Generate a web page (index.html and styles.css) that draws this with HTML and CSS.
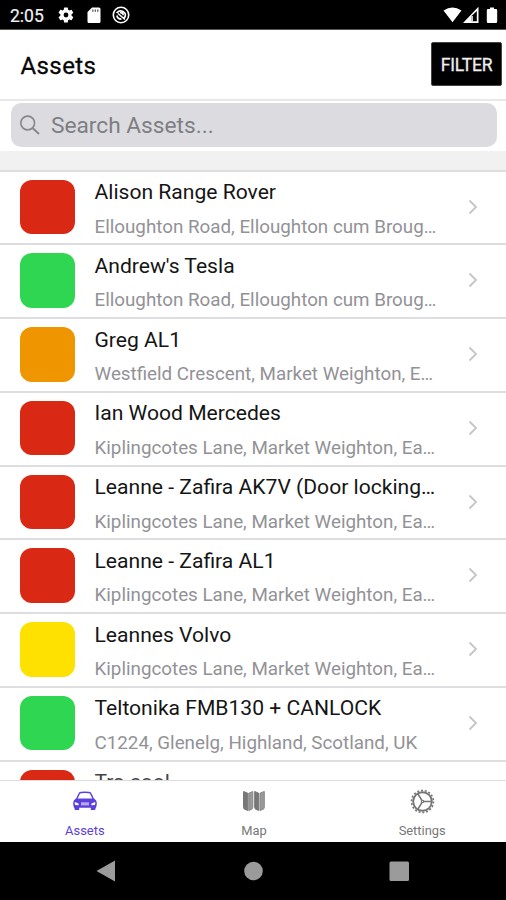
FILE: index.html
```html
<!DOCTYPE html>
<html lang="en">
<head>
<meta charset="utf-8">
<title>Assets</title>
<link rel="stylesheet" href="styles.css">
</head>
<body>
<div class="status">
  <span class="time">2:05</span>
  <svg class="s-gear" width="18" height="18" viewBox="0 0 24 24"><path fill="#fff" fill-rule="evenodd" d="M19.4 13a7.500 7.500 0 0 0 0-2l2.100-1.600a.5.5 0 0 0 .1-.6l-2-3.500a.5.5 0 0 0-.6-.2l-2.500 1a7.300 7.300 0 0 0-1.700-1l-.4-2.600a.5.5 0 0 0-.5-.4h-4a.5.5 0 0 0-.5.4L9 5.100a7.300 7.300 0 0 0-1.700 1l-2.500-1a.5.5 0 0 0-.6.2l-2 3.500a.5.5 0 0 0 .1.600L4.500 11a7.500 7.500 0 0 0 0 2l-2.200 1.600a.5.5 0 0 0-.1.600l2 3.500c.1.200.4.300.6.200l2.500-1c.5.400 1.100.7 1.700 1l.4 2.600c0 .2.200.4.500.4h4c.3 0 .5-.2.500-.4l.4-2.600a7.300 7.300 0 0 0 1.700-1l2.500 1c.2.100.5 0 .6-.2l2-3.500a.5.500 0 0 0-.1-.6zM12 15.200a3.200 3.200 0 1 1 0-6.400 3.200 3.200 0 0 1 0 6.400z"/></svg>
  <svg class="s-card" width="14" height="17" viewBox="0 0 14 17"><path fill="#fff" d="M5 .5h7q1.500 0 1.500 1.500v12.500q0 1.500-1.500 1.500H2q-1.500 0-1.500-1.500V5z"/><path stroke="#000" stroke-width="1.200" d="M5.800 2.500v2.200M8.300 2.500v2.200M10.800 2.500v2.200" opacity=".7"/></svg>
  <svg class="s-circle" width="18" height="18" viewBox="0 0 18 18" fill="none" stroke="#fff"><circle cx="9" cy="9" r="7.700" stroke-width="1.600"/><path stroke-width="1.600" d="M4.500 7Q9 2.500 13.200 7.500 14 11 11.500 12.500M6 7.500l7 6M4.800 9.500Q5.500 13 9.500 13.300M8 6.800q3-.3 3.200 2.400"/></svg>
  <span class="grow"></span>
  <svg width="56" height="18" viewBox="0 0 56 18"><path fill="#fff" d="M.5 4.500Q9.500-1.500 18.500 4.500L9.500 16.200zM35.500.7V17H20z"/><path fill="#000" d="M33.800 5v10.300h-5.300V10z"/><path fill="#fff" d="M28.500 10h1.300v5.500h-1.300z"/><path fill="#fff" d="M47 1.500h4V3h2q1.200 0 1.200 1.200V15.800Q54.200 17 53 17h-8q-1.200 0-1.200-1.200V4.200Q43.800 3 45 3h2z"/></svg>
</div>
<header class="header"><h1>Assets</h1><button class="filter">FILTER</button></header>
<div class="searchbar"><div class="search">
  <svg width="22" height="22" viewBox="0 0 22 22" fill="none" stroke="#85858a" stroke-width="1.600"><circle cx="7.700" cy="9" r="6.900"/><path d="m12.600 14 6.400 6" stroke-width="1.900"/></svg>
  <span>Search Assets...</span></div></div>
<div class="gap"></div>
<main class="list">
  <div class="row"><i class="tile red"></i><div class="info"><b>Alison Range Rover</b><span>Elloughton Road, Elloughton cum Broug…</span></div><svg class="chev" viewBox="0 0 10 16"><path d="m1.500 1.500 6.500 6.500-6.500 6.500"/></svg></div>
  <div class="row"><i class="tile green"></i><div class="info"><b>Andrew's Tesla</b><span>Elloughton Road, Elloughton cum Broug…</span></div><svg class="chev" viewBox="0 0 10 16"><path d="m1.500 1.500 6.500 6.500-6.500 6.500"/></svg></div>
  <div class="row"><i class="tile orange"></i><div class="info"><b>Greg AL1</b><span>Westfield Crescent, Market Weighton, E…</span></div><svg class="chev" viewBox="0 0 10 16"><path d="m1.500 1.500 6.500 6.500-6.500 6.500"/></svg></div>
  <div class="row"><i class="tile red"></i><div class="info"><b>Ian Wood Mercedes</b><span>Kiplingcotes Lane, Market Weighton, Ea…</span></div><svg class="chev" viewBox="0 0 10 16"><path d="m1.500 1.500 6.500 6.500-6.500 6.500"/></svg></div>
  <div class="row"><i class="tile red"></i><div class="info"><b>Leanne - Zafira AK7V (Door locking…</b><span>Kiplingcotes Lane, Market Weighton, Ea…</span></div><svg class="chev" viewBox="0 0 10 16"><path d="m1.500 1.500 6.500 6.500-6.500 6.500"/></svg></div>
  <div class="row"><i class="tile red"></i><div class="info"><b>Leanne - Zafira AL1</b><span>Kiplingcotes Lane, Market Weighton, Ea…</span></div><svg class="chev" viewBox="0 0 10 16"><path d="m1.500 1.500 6.500 6.500-6.500 6.500"/></svg></div>
  <div class="row"><i class="tile yellow"></i><div class="info"><b>Leannes Volvo</b><span>Kiplingcotes Lane, Market Weighton, Ea…</span></div><svg class="chev" viewBox="0 0 10 16"><path d="m1.500 1.500 6.500 6.500-6.500 6.500"/></svg></div>
  <div class="row"><i class="tile green"></i><div class="info"><b>Teltonika FMB130 + CANLOCK</b><span>C1224, Glenelg, Highland, Scotland, UK</span></div><svg class="chev" viewBox="0 0 10 16"><path d="m1.500 1.500 6.500 6.500-6.500 6.500"/></svg></div>
  <div class="row"><i class="tile red"></i><div class="info"><b class="cut">Tra cool</b></div></div>
</main>
<nav class="tabs">
  <div class="tab active"><svg width="26" height="24" viewBox="0 0 26 24"><path fill="none" stroke="currentColor" stroke-width="1.500" d="M4.500 10.500 7 5Q7.500 3.800 9 3.600q4-.6 8 0 1.500.2 2 1.400l2.500 5.500"/><path fill="currentColor" fill-rule="evenodd" d="M4 9.500h18q2.600 1.500 2.800 4 .2 3-.8 5.300H2q-1-2.300-.8-5.300.2-2.500 2.800-4zM2.800 13q-.3 2 .4 3l3 .2q1-.4.300-1.700zM23.200 13q.3 2-.4 3l-3 .2q-1-.4-.3-1.700zM9 13.500v2.700h8v-2.700z"/><path fill="currentColor" opacity=".45" d="M9 13.500h8v2.700H9z"/><path fill="currentColor" d="M2.500 18h4.700v3H3.500q-1 0-1-1zM18.800 18h4.700v2q0 1-1 1h-3.700z"/></svg><span>Assets</span></div>
  <div class="tab map"><svg width="24" height="24" viewBox="0 0 24 24"><path fill="#777" stroke="#777" stroke-linejoin="round" d="m1.500 2.500 4.300 1.700v17.300l-3.300-1.300q-1-.5-1-1.700zM12.700 2.500l4 1.700v17.300l-3-1.300q-1-.5-1-1.700z"/><path fill="#999" stroke="#888" stroke-linejoin="round" d="m6.800 4.200 4-1.700v16q0 1.200-1 1.700l-3 1.300zM18 4.200l4.300-1.700v16q0 1.200-1 1.700L18 21.500z"/></svg><span>Map</span></div>
  <div class="tab"><svg width="26" height="26" viewBox="0 0 26 26" fill="none" stroke="#747474"><circle cx="13.500" cy="12.500" r="9.300" stroke-width="1.900"/><circle cx="13.500" cy="12.500" r="11" stroke-width="1.600" stroke-dasharray="2 1.840"/><path stroke-width="1.600" d="M14.500 12.500h8M12.700 11.200 8.800 4.700M12.700 13.800l-3.900 6.500"/><circle cx="13.500" cy="12.500" r="1.200" stroke-width="1.200"/></svg><span>Settings</span></div>
</nav>
<footer class="sysnav">
  <svg width="506" height="58" viewBox="0 0 506 58" fill="#9b9b9b"><path d="M96.500 29 115 18.500v21z"/><circle cx="253.500" cy="29" r="9.300"/><rect x="389.500" y="19.500" width="19.500" height="19.500" rx="1.500"/></svg>
</footer>
</body>
</html>
```

FILE: styles.css
```css
* { box-sizing: border-box; }
body {
  margin: 0;
  width: 506px;
  height: 900px;
  overflow: hidden;
  display: flex;
  flex-direction: column;
  background: #fff;
  font-family: Roboto, "Liberation Sans", sans-serif;
}
svg { display: block; flex: none; }
.status {
  height: 30px;
  flex: none;
  background: #000;
  border-bottom: 1px solid #555;
  display: flex;
  align-items: center;
  padding: 1px 7px 0 10px;
  color: #f2f2f2;
}
.time { width: 47px; margin-top: 2px; font-size: 17.500px; -webkit-text-stroke: .2px #f2f2f2; }
.s-card { margin-left: 12px; }
.s-circle { margin-left: 11px; }
.grow { flex: 1; }
.header {
  height: 71px;
  flex: none;
  display: flex;
  align-items: center;
  justify-content: space-between;
  padding: 0 4px 2px 20.500px;
  border-bottom: 2px solid #e8e8e9;
}
h1 { margin: 4px 0 0; font-size: 24px; font-weight: 400; line-height: 28px; letter-spacing: .4px; color: #080808; -webkit-text-stroke: .3px #080808; }
.filter {
  width: 71px;
  height: 44px;
  padding: 2px 0 0;
  border: 1px solid #444;
  border-radius: 2px;
  background: #000;
  color: #eee;
  font: 400 17.500px Roboto, sans-serif;
  letter-spacing: -.2px;
  -webkit-text-stroke: .3px #eee;
}
.searchbar { height: 50px; flex: none; padding: 2px 9px 0 10.500px; }
.search {
  height: 44px;
  border-radius: 10px;
  background: #dcdbe0;
  display: flex;
  align-items: center;
  padding-left: 9px;
  color: #7e7e83;
  font-size: 22.700px;
}
.search span { margin: 1px 0 0 9.500px; }
.gap { height: 18.500px; flex: none; background: #f1f1f1; }
.list { height: 610.500px; flex: none; overflow: hidden; }
.row {
  height: 73.750px;
  border-top: 2px solid #dedee0;
  display: flex;
  align-items: flex-start;
  padding-left: 20px;
}
.tile { width: 54.500px; height: 54.500px; margin-top: 8px; border-radius: 12px; flex: none; }
.red { background: #d92813; }
.green { background: #2fd651; }
.orange { background: #ef9500; }
.yellow { background: #ffe100; }
.info { width: 378px; padding: 7.500px 0 0 20px; white-space: nowrap; }
.info b { display: block; font-size: 21.100px; font-weight: 400; line-height: 26px; color: #151515; }
.info span { display: block; margin-top: 10.500px; font-size: 18.800px; line-height: 23px; color: #929296; }
.info .cut { color: #444; }
.chev { width: 10px; height: 16px; margin-top: 27px; margin-left: 15px; fill: none; stroke: #c5c5c9; stroke-width: 1.800; }
.tabs {
  height: 62px;
  flex: none;
  border-top: 1px solid #ddd;
  display: grid;
  grid-template-columns: repeat(3, 1fr);
  background: #fff;
}
.tab {
  display: flex;
  flex-direction: column;
  align-items: center;
  justify-content: space-between;
  padding: 8px 0 3px 1px;
  color: #777;
  font-size: 12.900px;
  line-height: 16px;
}
.map { padding-left: 2px; }
.active { color: #5b40dc; }
.sysnav { height: 58px; flex: none; background: #000; }
```
